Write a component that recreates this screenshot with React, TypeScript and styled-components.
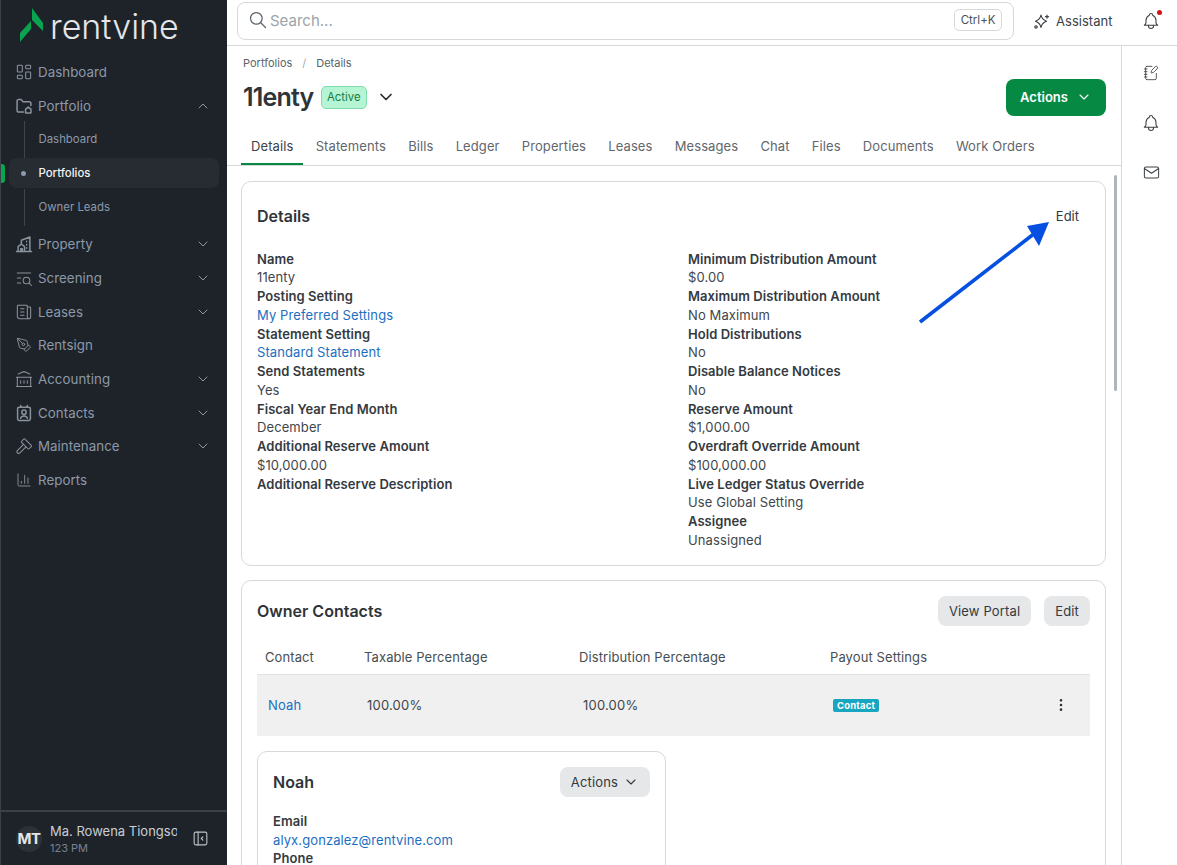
import React from 'react';
import styled, { createGlobalStyle } from 'styled-components';
import {
  TbLayoutDashboard,
  TbListSearch,
  TbNews,
  TbBuildingBank,
  TbHammer,
  TbChevronDown,
  TbChevronUp,
  TbSearch,
  TbBell,
  TbMail,
  TbDotsVertical,
  TbLayoutSidebarLeftCollapse,
} from 'react-icons/tb';
import { NotebookPen, PenTool, ChartColumn } from 'lucide-react';

const GlobalStyle = createGlobalStyle`
  html, body {
    margin: 0;
    padding: 0;
    height: 100%;
    overflow: hidden;
    background: #ffffff;
    font-family: Inter, "Liberation Sans", sans-serif;
    color: #2f3439;
  }
  * { box-sizing: border-box; }
`;

const Shell = styled.div`
  display: flex;
  width: 1177px;
  height: 865px;
  overflow: hidden;
`;

/* Sidebar */
const Sidebar = styled.aside`
  width: 227px;
  flex-shrink: 0;
  display: flex;
  flex-direction: column;
  background: #1e2329;
  border-left: 1px solid #39404a;
`;

const Brand = styled.div`
  height: 55px;
  display: flex;
  align-items: center;
  padding: 0 0 5px 19px;
  gap: 6px;
`;

const BrandText = styled.span`
  font-family: Inter, sans-serif;
  font-size: 34px;
  font-weight: 300;
  line-height: 40px;
  margin-top: 3px;
  color: #e4e6e9;
`;

const NavList = styled.nav`
  flex: 1;
  display: flex;
  flex-direction: column;
`;

const NavRow = styled.div`
  height: 33.7px;
  display: flex;
  align-items: center;
  padding: 0 16px 0 15px;
  gap: 6px;
  color: #8c99aa;
  font-size: 13.3px;
  letter-spacing: 0.05px;
  svg { stroke-width: 1.5; }
  svg.lead {
    width: 16px;
    height: 16px;
    flex-shrink: 0;
    overflow: visible;
    color: #8a929c;
    stroke-width: 1.4;
  }
  svg.lead.tabler {
    width: 20px;
    height: 20px;
    margin: 0 -2px;
    stroke-width: 1.25;
  }
`;

const NavLabel = styled.span`
  flex: 1;
`;

const SubList = styled.div`
  display: flex;
  flex-direction: column;
  margin-bottom: 3px;
`;

const SubRow = styled.div<{ $active?: boolean }>`
  position: relative;
  height: 30px;
  margin: 2px 8px 2px 8px;
  padding-left: 29.5px;
  display: flex;
  align-items: center;
  border-radius: 8px;
  font-size: 11.4px;
  font-weight: ${p => (p.$active ? 500 : 400)};
  color: ${p => (p.$active ? '#f1f3f5' : '#8c99aa')};
  background: ${p => (p.$active ? '#272c32' : 'transparent')};
  &::before {
    content: '';
    position: absolute;
    left: 15px;
    top: ${p => (p.$active ? '50%' : '-3px')};
    bottom: ${p => (p.$active ? 'auto' : '-4px')};
    width: ${p => (p.$active ? '5px' : '1px')};
    height: ${p => (p.$active ? '5px' : 'auto')};
    margin: ${p => (p.$active ? '-2.5px 0 0 -3px' : '0')};
    border-radius: ${p => (p.$active ? '50%' : '0')};
    background: ${p => (p.$active ? '#8c99aa' : '#3d444c')};
  }
  &::after {
    content: '';
    display: ${p => (p.$active ? 'block' : 'none')};
    position: absolute;
    left: -8px;
    top: 6px;
    width: 4px;
    height: 19px;
    border-radius: 0 3px 3px 0;
    background: #0aa34f;
  }
`;

const UserBar = styled.div`
  height: 55px;
  border-top: 2px solid #3a4047;
  display: flex;
  align-items: center;
  padding: 0 17px 0 15px;
  gap: 8px;
`;

const Avatar = styled.div`
  width: 26px;
  height: 26px;
  flex-shrink: 0;
  border-radius: 50%;
  background: #2b3237;
  color: #e4e6e9;
  font-size: 15px;
  font-weight: 700;
  display: flex;
  align-items: center;
  justify-content: center;
  letter-spacing: -0.5px;
`;

const UserText = styled.div`
  width: 127px;
  overflow: hidden;
  white-space: nowrap;
`;

const UserName = styled.div`
  font-size: 13px;
  line-height: 18px;
  color: #c9ced4;
`;

const UserMeta = styled.div`
  font-size: 11px;
  line-height: 16px;
  color: #78828d;
`;

const CollapseButton = styled.div`
  margin-left: auto;
  display: flex;
  color: #bcc2c9;
  svg { stroke-width: 1.4; }
`;

/* Right hand side */
const Workspace = styled.div`
  flex: 1;
  min-width: 0;
  display: flex;
  flex-direction: column;
`;

const TopBar = styled.header`
  height: 46px;
  flex-shrink: 0;
  display: flex;
  align-items: flex-start;
  padding: 2px 0 0 10px;
  border-bottom: 1px solid #d6d8da;
`;

const SearchBox = styled.div`
  width: 777px;
  height: 38px;
  display: flex;
  align-items: center;
  gap: 4px;
  padding: 0 11px 2px 10px;
  border: 1px solid #d6d8da;
  border-radius: 8px;
  color: #5d656c;
  svg { stroke-width: 1.5; }
`;

const SearchHint = styled.span`
  flex: 1;
  font-size: 15px;
  margin-left: -2px;
  color: #9ca3a9;
`;

const Kbd = styled.span`
  height: 22px;
  padding: 0 5.5px;
  display: flex;
  align-items: center;
  border: 1px solid #d6d8da;
  border-radius: 5px;
  font-size: 11.5px;
  color: #4a5157;
`;

const AssistantButton = styled.div`
  display: flex;
  align-items: center;
  gap: 6px;
  height: 38px;
  margin-left: 19px;
  font-size: 13px;
  letter-spacing: 0.03px;
  color: #3c4247;
`;

const BellWrap = styled.div`
  position: relative;
  display: flex;
  align-items: center;
  height: 38px;
  margin-left: 28px;
  color: #3c4247;
  svg { stroke-width: 1.3; }
  &::after {
    content: '';
    position: absolute;
    top: 8px;
    right: -1px;
    width: 5px;
    height: 5px;
    border-radius: 50%;
    background: #d0121b;
  }
`;

const Body = styled.div`
  flex: 1;
  min-height: 0;
  display: flex;
`;

const Main = styled.main`
  position: relative;
  flex: 1;
  min-width: 0;
  overflow: hidden;
`;

const Rail = styled.aside`
  width: 56px;
  flex-shrink: 0;
  border-left: 1px solid #d6d8da;
  display: flex;
  flex-direction: column;
  align-items: center;
  padding: 17px 0 0 3px;
  gap: 29.5px;
  color: #3c4247;
  svg { stroke-width: 1.3; }
`;

const RailSlot = styled.span`
  height: 20px;
  display: flex;
  align-items: center;
`;

const PageHead = styled.div`
  padding: 10px 15px 0 16px;
  height: 120px;
  border-bottom: 1px solid #d6d8da;
  display: flex;
  flex-direction: column;
`;

const Crumbs = styled.div`
  display: flex;
  gap: 10px;
  font-size: 11px;
  line-height: 14px;
  color: #5b6369;
  span:nth-child(2) { color: #a3a9ae; }
`;

const TitleRow = styled.div`
  display: flex;
  align-items: center;
  margin-top: 5px;
  height: 44px;
`;

const Title = styled.h1`
  margin: 0;
  font-size: 25px;
  font-weight: 600;
  letter-spacing: -0.8px;
  color: #2f3439;
`;

const Status = styled.span`
  margin-left: 7px;
  height: 23px;
  padding: 0 5.5px;
  display: flex;
  align-items: center;
  border: 1px solid #7fdcae;
  border-radius: 5px;
  background: #b5f5d3;
  color: #157a47;
  font-size: 11.4px;
`;

const TitleCaret = styled.span`
  display: flex;
  margin-left: 9px;
  color: #24282c;
`;

const PrimaryButton = styled.button`
  margin-left: auto;
  width: 100px;
  height: 37px;
  display: flex;
  align-items: center;
  justify-content: center;
  gap: 8px;
  border: none;
  border-radius: 8px;
  background: #068a43;
  color: #ffffff;
  font-family: inherit;
  font-size: 13px;
  font-weight: 600;
  svg { stroke-width: 1.6; }
`;

const Tabs = styled.div`
  display: flex;
  gap: 2.2px;
  margin: 9px 0 0 -2px;
`;

const Tab = styled.div<{ $active?: boolean }>`
  height: 37px;
  padding: 0 10px;
  display: flex;
  align-items: center;
  font-size: 13px;
  letter-spacing: 0.1px;
  color: ${p => (p.$active ? '#3b4248' : '#5f676d')};
  border-bottom: 2px solid ${p => (p.$active ? '#068a43' : 'transparent')};
`;

const Content = styled.div`
  padding: 15px 15px 0 14px;
  display: flex;
  flex-direction: column;
  gap: 14.3px;
`;

const Card = styled.section<{ $roomy?: boolean }>`
  border: 1px solid #d6d8da;
  border-radius: 10px;
  padding: ${p => (p.$roomy ? '19px' : '15px')} 15px 15px;
`;

const CardHead = styled.div`
  height: 30px;
  display: flex;
  align-items: center;
  justify-content: space-between;
`;

const CardTitle = styled.h2`
  margin: 0;
  font-size: 16px;
  font-weight: 600;
  color: #2f3439;
`;

const PlainAction = styled.span`
  font-size: 13px;
  margin-right: 11px;
  color: #33393e;
`;

const FieldColumns = styled.div`
  display: grid;
  grid-template-columns: 431px 1fr;
  margin-top: 18.7px;
`;

const FieldStack = styled.div`
  display: flex;
  flex-direction: column;
`;

const OwnerFields = styled.div`
  margin-top: 15px;
`;

const FieldName = styled.div`
  font-size: 13px;
  line-height: 18.75px;
  font-weight: 600;
  letter-spacing: 0.05px;
  color: #343a3f;
`;

const FieldValue = styled.div<{ $link?: boolean }>`
  font-size: 13px;
  line-height: 18.75px;
  letter-spacing: 0.1px;
  color: ${p => (p.$link ? '#1b6fc2' : '#3f464b')};
`;

const HeadActions = styled.div`
  display: flex;
  gap: 13px;
`;

const GreyButton = styled.button`
  height: 30px;
  padding: 0 11px;
  display: flex;
  align-items: center;
  gap: 5px;
  border: none;
  border-radius: 8px;
  background: #e5e7e8;
  color: #33393e;
  font-family: inherit;
  font-size: 13px;
  letter-spacing: 0.15px;
  svg { stroke-width: 1.6; }
`;

const TableHead = styled.div`
  display: grid;
  grid-template-columns: 99px 215px 251px 1fr;
  height: 34px;
  margin-top: 15px;
  padding-left: 8px;
  align-items: center;
  font-size: 13px;
  letter-spacing: 0.1px;
  color: #474e53;
  border-bottom: 1px solid #dfe1e2;
`;

const TableRow = styled.div`
  display: grid;
  grid-template-columns: 99px 216px 250px 1fr 24px;
  height: 61px;
  padding: 0 21px 0 11px;
  align-items: center;
  font-size: 13px;
  letter-spacing: 0.2px;
  color: #3f464b;
  background: #f0f0f0;
`;

const ContactLink = styled.span`
  color: #1b6fc2;
`;

const Tag = styled.span`
  justify-self: start;
  height: 13px;
  padding: 0 4px;
  display: flex;
  align-items: center;
  border-radius: 2px;
  background: #17a5bf;
  color: #ffffff;
  font-size: 9.5px;
  font-weight: 700;
`;

const Kebab = styled.span`
  display: flex;
  justify-content: flex-end;
  color: #2f3439;
`;

const OwnerCard = styled.div`
  width: 409px;
  margin-top: 15px;
  border: 1px solid #d6d8da;
  border-radius: 10px;
  padding: 15px;
`;

const ScrollThumb = styled.div`
  position: absolute;
  top: 129px;
  right: 4px;
  width: 3px;
  height: 216px;
  border-radius: 2px;
  background: #aeb5ba;
`;

const Annotation = styled.svg`
  position: absolute;
  left: 680px;
  top: 160px;
  pointer-events: none;
`;

const LogoMark = () => (
  <svg width="24" height="34" viewBox="0 0 24 34">
    <path d="M12 0L23 15V23L12 12Z" fill="#0aa34f" />
    <path d="M0 25L11 13V21L0 34Z" fill="#0aa34f" />
  </svg>
);

const stroke = { fill: 'none', stroke: 'currentColor', strokeWidth: 1.3, strokeLinecap: 'round', strokeLinejoin: 'round' } as const;

const FolderHomeIcon = () => (
  <svg className="lead" viewBox="0 0 15 15" {...stroke}>
    <path d="M7 13.2H2.5A1.5 1.5 0 0 1 1 11.7V2.8A1.3 1.3 0 0 1 2.3 1.5H5l1.6 2h5.9A1.5 1.5 0 0 1 14 5v2" />
    <path d="M9 10.5l2.5-2 2.5 2V14H9z" />
  </svg>
);

const PropertyIcon = () => (
  <svg className="lead" viewBox="0 0 15 15" {...stroke}>
    <path d="M0.5 14.5h14M5 7V4l8-3v13.5M2 14.5V10l3-2.5L8 10v4.5" />
    <path d="M10 5v.5M10 8v.5M10 11v.5M4.5 14.5V12h1.5v2.5" />
  </svg>
);

const ContactCardIcon = () => (
  <svg className="lead" viewBox="0 0 15 15" {...stroke}>
    <rect x="1.5" y="2" width="12" height="12.5" rx="1.5" />
    <path d="M4.5 0.5V2M10.5 0.5V2" />
    <circle cx="7.5" cy="6.8" r="2" />
    <path d="M4.3 12.5c.4-1.6 1.6-2.3 3.2-2.3s2.8.7 3.2 2.3" />
  </svg>
);

const AssistantIcon = () => (
  <svg width="17" height="17" viewBox="0 0 17 17" fill="none" stroke="currentColor" strokeWidth="1.2" strokeLinecap="round" strokeLinejoin="round">
    <path d="M8 2C8.7 5.6 10 7 13.5 8.2 10 9.4 8.7 10.8 8 14.5 7.3 10.8 6 9.4 2.5 8.2 6 7 7.3 5.6 8 2Z" />
    <path d="M14 2.2v3M12.5 3.7h3" />
    <circle cx="3" cy="14" r="1.2" />
  </svg>
);

const NAV_AFTER = [
  { label: 'Property', icon: <PropertyIcon />, caret: true },
  { label: 'Screening', icon: <TbListSearch className="lead tabler" />, caret: true },
  { label: 'Leases', icon: <TbNews className="lead tabler" />, caret: true },
  { label: 'Rentsign', icon: <PenTool className="lead" />, caret: false },
  { label: 'Accounting', icon: <TbBuildingBank className="lead tabler" />, caret: true },
  { label: 'Contacts', icon: <ContactCardIcon />, caret: true },
  { label: 'Maintenance', icon: <TbHammer className="lead tabler" />, caret: true },
  { label: 'Reports', icon: <ChartColumn className="lead" />, caret: false },
];

const TABS = ['Details', 'Statements', 'Bills', 'Ledger', 'Properties', 'Leases', 'Messages', 'Chat', 'Files', 'Documents', 'Work Orders'];

const LEFT_FIELDS: [string, string?, boolean?][] = [
  ['Name', '11enty'],
  ['Posting Setting', 'My Preferred Settings', true],
  ['Statement Setting', 'Standard Statement', true],
  ['Send Statements', 'Yes'],
  ['Fiscal Year End Month', 'December'],
  ['Additional Reserve Amount', '$10,000.00'],
  ['Additional Reserve Description'],
];

const RIGHT_FIELDS: [string, string][] = [
  ['Minimum Distribution Amount', '$0.00'],
  ['Maximum Distribution Amount', 'No Maximum'],
  ['Hold Distributions', 'No'],
  ['Disable Balance Notices', 'No'],
  ['Reserve Amount', '$1,000.00'],
  ['Overdraft Override Amount', '$100,000.00'],
  ['Live Ledger Status Override', 'Use Global Setting'],
  ['Assignee', 'Unassigned'],
];

export default function App() {
  return (
    <Shell>
      <GlobalStyle />
      <Sidebar>
        <Brand>
          <LogoMark />
          <BrandText>rentvine</BrandText>
        </Brand>
        <NavList>
          <NavRow>
            <TbLayoutDashboard className="lead tabler" />
            <NavLabel>Dashboard</NavLabel>
          </NavRow>
          <NavRow>
            <FolderHomeIcon />
            <NavLabel>Portfolio</NavLabel>
            <TbChevronUp size={16} />
          </NavRow>
          <SubList>
            <SubRow>Dashboard</SubRow>
            <SubRow $active>Portfolios</SubRow>
            <SubRow>Owner Leads</SubRow>
          </SubList>
          {NAV_AFTER.map(item => (
            <NavRow key={item.label}>
              {item.icon}
              <NavLabel>{item.label}</NavLabel>
              {item.caret && <TbChevronDown size={16} />}
            </NavRow>
          ))}
        </NavList>
        <UserBar>
          <Avatar>MT</Avatar>
          <UserText>
            <UserName>Ma. Rowena Tiongson</UserName>
            <UserMeta>123 PM</UserMeta>
          </UserText>
          <CollapseButton>
            <TbLayoutSidebarLeftCollapse size={19} />
          </CollapseButton>
        </UserBar>
      </Sidebar>

      <Workspace>
        <TopBar>
          <SearchBox>
            <TbSearch size={20} />
            <SearchHint>Search...</SearchHint>
            <Kbd>Ctrl+K</Kbd>
          </SearchBox>
          <AssistantButton>
            <AssistantIcon />
            Assistant
          </AssistantButton>
          <BellWrap>
            <TbBell size={20} />
          </BellWrap>
        </TopBar>
        <Body>
          <Main>
            <PageHead>
              <Crumbs>
                <span>Portfolios</span>
                <span>/</span>
                <span>Details</span>
              </Crumbs>
              <TitleRow>
                <Title>11enty</Title>
                <Status>Active</Status>
                <TitleCaret>
                  <TbChevronDown size={20} />
                </TitleCaret>
                <PrimaryButton>
                  Actions
                  <TbChevronDown size={16} />
                </PrimaryButton>
              </TitleRow>
              <Tabs>
                {TABS.map((t, i) => (
                  <Tab key={t} $active={i === 0}>{t}</Tab>
                ))}
              </Tabs>
            </PageHead>
            <Content>
              <Card $roomy>
                <CardHead>
                  <CardTitle>Details</CardTitle>
                  <PlainAction>Edit</PlainAction>
                </CardHead>
                <FieldColumns>
                  <FieldStack>
                    {LEFT_FIELDS.map(([name, value, link]) => (
                      <React.Fragment key={name}>
                        <FieldName>{name}</FieldName>
                        {value && <FieldValue $link={link}>{value}</FieldValue>}
                      </React.Fragment>
                    ))}
                  </FieldStack>
                  <FieldStack>
                    {RIGHT_FIELDS.map(([name, value]) => (
                      <React.Fragment key={name}>
                        <FieldName>{name}</FieldName>
                        <FieldValue>{value}</FieldValue>
                      </React.Fragment>
                    ))}
                  </FieldStack>
                </FieldColumns>
              </Card>
              <Card>
                <CardHead>
                  <CardTitle>Owner Contacts</CardTitle>
                  <HeadActions>
                    <GreyButton>View Portal</GreyButton>
                    <GreyButton>Edit</GreyButton>
                  </HeadActions>
                </CardHead>
                <TableHead>
                  <span>Contact</span>
                  <span>Taxable Percentage</span>
                  <span>Distribution Percentage</span>
                  <span>Payout Settings</span>
                </TableHead>
                <TableRow>
                  <ContactLink>Noah</ContactLink>
                  <span>100.00%</span>
                  <span>100.00%</span>
                  <Tag>Contact</Tag>
                  <Kebab><TbDotsVertical size={16} /></Kebab>
                </TableRow>
                <OwnerCard>
                  <CardHead>
                    <CardTitle>Noah</CardTitle>
                    <GreyButton>
                      Actions
                      <TbChevronDown size={16} />
                    </GreyButton>
                  </CardHead>
                  <OwnerFields>
                    <FieldName>Email</FieldName>
                    <FieldValue $link>alyx.gonzalez@rentvine.com</FieldValue>
                    <FieldName>Phone</FieldName>
                  </OwnerFields>
                </OwnerCard>
              </Card>
            </Content>
            <ScrollThumb />
            <Annotation width="150" height="130" viewBox="0 0 150 130">
              <line x1="13" y1="116" x2="128" y2="27" stroke="#0550e0" strokeWidth="3.6" />
              <polygon points="142,16 120,20 132,40" fill="#0550e0" />
            </Annotation>
          </Main>
          <Rail>
            <RailSlot><NotebookPen size={16} strokeWidth={1.6} /></RailSlot>
            <RailSlot><TbBell size={20} /></RailSlot>
            <RailSlot><TbMail size={19} /></RailSlot>
          </Rail>
        </Body>
      </Workspace>
    </Shell>
  );
}
